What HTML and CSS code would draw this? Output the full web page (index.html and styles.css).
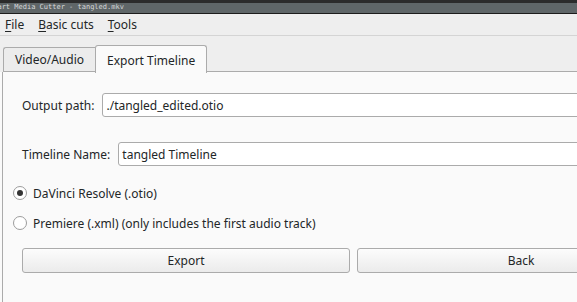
FILE: index.html
```html
<!DOCTYPE html>
<html lang="en">
<head>
  <meta charset="UTF-8">
  <title>Smart Media Cutter - tangled.mkv</title>
  <link rel="stylesheet" href="styles.css">
</head>
<body>
  <div class="window">
    <div class="titlebar">
      <span class="title">Smart Media Cutter - tangled.mkv</span>
    </div>

    <div class="menubar">
      <span class="menu-item"><u>F</u>ile</span>
      <span class="menu-item"><u>B</u>asic cuts</span>
      <span class="menu-item"><u>T</u>ools</span>
    </div>

    <div class="tabbar">
      <div class="tab">Video/Audio</div>
      <div class="tab active">Export Timeline</div>
      <div class="tab-rest"></div>
    </div>

    <div class="pane">
      <div class="field-row first">
        <label class="field-label" for="outpath">Output path:</label>
        <input class="field-input" id="outpath" type="text" value="./tangled_edited.otio">
      </div>
      <div class="field-row">
        <label class="field-label" for="tlname">Timeline Name:</label>
        <input class="field-input" id="tlname" type="text" value="tangled Timeline">
      </div>

      <div class="radio-row first">
        <span class="radio checked"></span>
        <span>DaVinci Resolve (.otio)</span>
      </div>
      <div class="radio-row">
        <span class="radio"></span>
        <span>Premiere (.xml) (only includes the first audio track)</span>
      </div>

      <div class="button-row">
        <button class="btn">Export</button>
        <button class="btn">Back</button>
      </div>
    </div>
  </div>
</body>
</html>
```

FILE: styles.css
```css
* {
  margin: 0;
  padding: 0;
  box-sizing: border-box;
}

body {
  background-color: #fafafa;
  overflow: hidden;
  font-family: 'Noto Sans', sans-serif;
  font-size: 12px;
  color: #232627;
}

.window {
  width: 705px;
  height: 302px;
  display: flex;
  flex-direction: column;
}

.titlebar {
  height: 14px;
  background-color: #5f6668;
  border-top: 3px solid #2b2b2b;
  border-bottom: 1px solid #1c1c1c;
  overflow: hidden;
}

.title {
  display: block;
  margin-left: -11px;
  margin-top: -1px;
  font-family: 'DejaVu Sans Mono', monospace;
  font-size: 7px;
  line-height: 10px;
  color: #d6d8d8;
}

.menubar {
  height: 22px;
  background-color: #eeeeee;
  border-bottom: 1px solid #d4d4d4;
  display: flex;
  align-items: center;
  padding-left: 5px;
  gap: 14px;
}

.menu-item u {
  text-decoration-thickness: 1px;
  text-underline-offset: 2px;
}

.tabbar {
  height: 36px;
  background-color: #eeeeee;
  display: flex;
  align-items: flex-end;
  padding-left: 3px;
}

.tab {
  height: 25px;
  padding: 0 11px;
  background-color: #ececec;
  border: 1px solid #ababab;
  border-right: none;
  border-radius: 3px 0 0 0;
  display: flex;
  align-items: center;
}

.tab.active {
  height: 28px;
  padding-top: 1px;
  background-color: #fafafa;
  border-right: 1px solid #ababab;
  border-bottom: none;
  border-radius: 3px 3px 0 0;
  margin-bottom: -1px;
  position: relative;
}

.tab-rest {
  flex: 1;
  border-bottom: 1px solid #ababab;
}

.pane {
  flex: 1;
  margin-left: 2px;
  border-left: 1px solid #ababab;
  background-color: #fafafa;
  padding: 0 20px 0 10px;
}

.field-row {
  display: flex;
  align-items: center;
  gap: 8px;
  margin-top: 25px;
  margin-left: 9px;
}

.field-row.first {
  margin-top: 21px;
}

.field-input {
  flex: 1;
  height: 24px;
  border: 1px solid #ababab;
  border-radius: 3px;
  background-color: #ffffff;
  font-family: 'Noto Sans', sans-serif;
  font-size: 12px;
  color: #232627;
  padding: 0 3px;
  outline: none;
}

.radio-row {
  display: flex;
  align-items: center;
  gap: 6px;
  height: 16px;
  margin-top: 14px;
}

.radio-row.first {
  margin-top: 19px;
}

.radio {
  width: 14px;
  height: 14px;
  border: 1px solid #9c9c9c;
  border-radius: 50%;
  background-color: #ffffff;
  display: flex;
  align-items: center;
  justify-content: center;
}

.radio.checked::after {
  content: "";
  width: 6px;
  height: 6px;
  border-radius: 50%;
  background-color: #333333;
}

.button-row {
  display: flex;
  gap: 7px;
  margin-top: 17px;
  margin-left: 9px;
}

.btn {
  flex: 1;
  height: 25px;
  border: 1px solid #ababab;
  border-radius: 3px;
  background: linear-gradient(to bottom, #fcfcfc, #ebebeb);
  font-family: 'Noto Sans', sans-serif;
  font-size: 12px;
  color: #232627;
}
```
